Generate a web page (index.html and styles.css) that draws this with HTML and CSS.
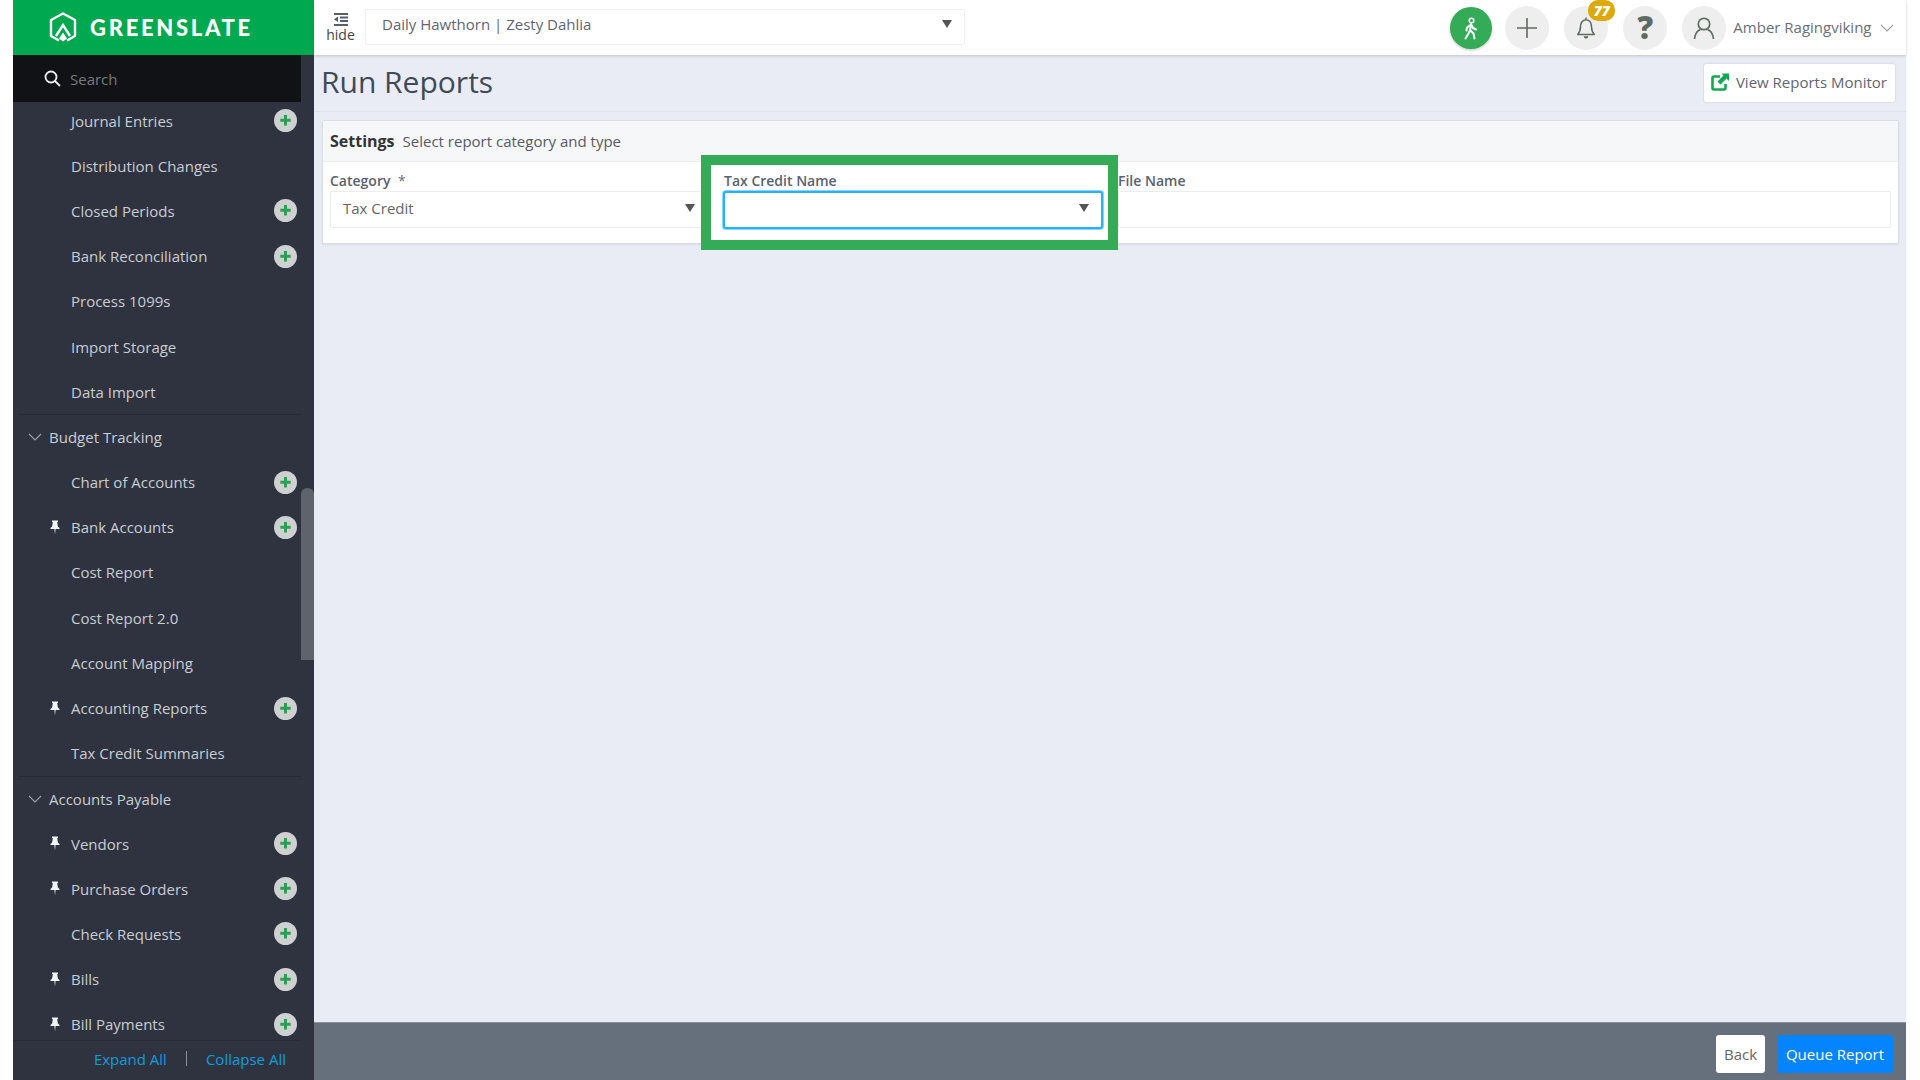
FILE: index.html
```html
<!DOCTYPE html>
<html lang="en">
<head>
    <meta charset="UTF-8">
    <meta name="viewport" content="width=device-width, initial-scale=1.0">
    <title>Run Reports</title>
    <link rel="stylesheet" href="styles.css">
</head>
<body>
    <svg class="defs" xmlns="http://www.w3.org/2000/svg">
        <symbol id="pin" viewBox="0 0 10 15">
            <path d="M2 0.5h6v1.2l-0.8 0.6 0.7 4.2 1.6 1.6v1H5.6L5 14.5 4.4 9.1H0.5v-1l1.6-1.6 0.7-4.2L2 1.7z" fill="#f2f3f4"/>
        </symbol>
        <symbol id="add" viewBox="0 0 23 23">
            <circle cx="11.5" cy="11.5" r="11.5" fill="#cfd1d1"/>
            <path d="M11.5 6v10.5M6.3 11.2h10.4" stroke="#2f9e52" stroke-width="3"/>
        </symbol>
        <symbol id="chev" viewBox="0 0 14 8">
            <path d="M1 1l6 6 6-6" fill="none" stroke="#9aa0a8" stroke-width="1.1"/>
        </symbol>
    </svg>

    <div class="app">
        <div class="sidebar">
            <div class="brand">
                <svg class="brand-mark" viewBox="0 0 28 31">
                    <path d="M10 28.5L2 24V8l12-6.5L26 8v16l-8 4.5" fill="none" stroke="#fff" stroke-width="2.4" stroke-linejoin="round"/>
                    <path d="M7 24l7-11 7 11" fill="none" stroke="#fff" stroke-width="2.4"/>
                    <path d="M14 20.5l4 6-4 3-4-3z" fill="#fff"/>
                </svg>
                <span class="brand-name">GREENSLATE</span>
            </div>
            <div class="side-body">
                <div class="side-main">
                    <div class="search">
                        <svg class="search-icon" viewBox="0 0 17 17">
                            <circle cx="7" cy="7" r="5.5" fill="none" stroke="#f0f0f0" stroke-width="1.8"/>
                            <path d="M11 11l5 5" stroke="#f0f0f0" stroke-width="1.8"/>
                        </svg>
                        <span>Search</span>
                    </div>
                    <div class="nav-list">
                        <div class="nav-row"><span class="pin-slot"></span>Journal Entries<svg class="add"><use href="#add"/></svg></div>
                        <div class="nav-row"><span class="pin-slot"></span>Distribution Changes</div>
                        <div class="nav-row"><span class="pin-slot"></span>Closed Periods<svg class="add"><use href="#add"/></svg></div>
                        <div class="nav-row"><span class="pin-slot"></span>Bank Reconciliation<svg class="add"><use href="#add"/></svg></div>
                        <div class="nav-row"><span class="pin-slot"></span>Process 1099s</div>
                        <div class="nav-row"><span class="pin-slot"></span>Import Storage</div>
                        <div class="nav-row"><span class="pin-slot"></span>Data Import</div>
                        <div class="nav-row nav-group"><svg class="chev"><use href="#chev"/></svg>Budget Tracking</div>
                        <div class="nav-row"><span class="pin-slot"></span>Chart of Accounts<svg class="add"><use href="#add"/></svg></div>
                        <div class="nav-row"><span class="pin-slot"><svg class="pin"><use href="#pin"/></svg></span>Bank Accounts<svg class="add"><use href="#add"/></svg></div>
                        <div class="nav-row"><span class="pin-slot"></span>Cost Report</div>
                        <div class="nav-row"><span class="pin-slot"></span>Cost Report 2.0</div>
                        <div class="nav-row"><span class="pin-slot"></span>Account Mapping</div>
                        <div class="nav-row"><span class="pin-slot"><svg class="pin"><use href="#pin"/></svg></span>Accounting Reports<svg class="add"><use href="#add"/></svg></div>
                        <div class="nav-row"><span class="pin-slot"></span>Tax Credit Summaries</div>
                        <div class="nav-row nav-group"><svg class="chev"><use href="#chev"/></svg>Accounts Payable</div>
                        <div class="nav-row"><span class="pin-slot"><svg class="pin"><use href="#pin"/></svg></span>Vendors<svg class="add"><use href="#add"/></svg></div>
                        <div class="nav-row"><span class="pin-slot"><svg class="pin"><use href="#pin"/></svg></span>Purchase Orders<svg class="add"><use href="#add"/></svg></div>
                        <div class="nav-row"><span class="pin-slot"></span>Check Requests<svg class="add"><use href="#add"/></svg></div>
                        <div class="nav-row"><span class="pin-slot"><svg class="pin"><use href="#pin"/></svg></span>Bills<svg class="add"><use href="#add"/></svg></div>
                        <div class="nav-row"><span class="pin-slot"><svg class="pin"><use href="#pin"/></svg></span>Bill Payments<svg class="add"><use href="#add"/></svg></div>
                    </div>
                    <div class="side-foot">
                        <a href="#">Expand All</a>
                        <span class="foot-sep"></span>
                        <a href="#">Collapse All</a>
                    </div>
                </div>
                <div class="side-track"><div class="side-thumb"></div></div>
            </div>
        </div>

        <div class="main">
            <div class="topbar">
                <div class="hide-toggle">
                    <svg class="hide-icon" viewBox="0 0 16 14">
                        <path d="M1 1h14M7 4.5h8M7 8h8M1 12h14" stroke="#55606a" stroke-width="2"/>
                        <path d="M5 3.5V9L1 6.2z" fill="#55606a"/>
                    </svg>
                    <span>hide</span>
                </div>
                <div class="project-select">
                    <span>Daily Hawthorn | Zesty Dahlia</span>
                    <i class="caret"></i>
                </div>
                <div class="top-actions">
                    <div class="round round-green">
                        <svg viewBox="0 0 24 24" class="round-icon">
                            <circle cx="12.5" cy="4.5" r="2.3" fill="none" stroke="#fff" stroke-width="1.5"/>
                            <path d="M12 8l-1 6 3.5 3.5 1 5M11 14.5l-1.5 3-3 5M11.5 9L8 11.5l-0.5 3M12.5 9l1.5 3 3 1.500" fill="none" stroke="#fff" stroke-width="2" stroke-linecap="round" stroke-linejoin="round"/>
                        </svg>
                    </div>
                    <div class="round">
                        <svg viewBox="0 0 24 24" class="round-icon">
                            <path d="M12 2v20M2 12h20" stroke="#5f6b60" stroke-width="1.6"/>
                        </svg>
                    </div>
                    <div class="round">
                        <svg viewBox="0 0 24 26" class="round-icon">
                            <path d="M3 20c2-2 3-4 3-8s2-8 6-8 6 4 6 8 1 6 3 8z" fill="none" stroke="#5f6b60" stroke-width="1.7" stroke-linejoin="round"/>
                            <path d="M12 1.5V4" stroke="#5f6b60" stroke-width="1.7"/>
                            <path d="M9.5 22a2.5 2.5 0 0 0 5 0z" fill="#5f6b60"/>
                        </svg>
                        <span class="badge">77</span>
                    </div>
                    <div class="round"><span class="help-mark">?</span></div>
                    <div class="round">
                        <svg viewBox="0 0 24 24" class="round-icon">
                            <circle cx="12" cy="8" r="5.7" fill="none" stroke="#5f6b60" stroke-width="1.7"/>
                            <path d="M2.5 23c0.5-5 3-8.5 6-9.5M21.5 23c-0.5-5-3-8.5-6-9.5" fill="none" stroke="#5f6b60" stroke-width="1.7"/>
                        </svg>
                    </div>
                    <span class="user-name">Amber Ragingviking</span>
                    <svg class="user-chev"><use href="#chev"/></svg>
                </div>
            </div>

            <div class="page-head">
                <h1>Run Reports</h1>
                <a class="monitor-btn" href="#">
                    <svg class="monitor-icon" viewBox="0 0 18 18">
                        <path d="M9 3.5H3A1.5 1.5 0 0 0 1.5 5v10A1.5 1.5 0 0 0 3 16.5h10a1.5 1.5 0 0 0 1.5-1.5v-4" fill="none" stroke="#10a94f" stroke-width="2.6"/>
                        <path d="M10.5 0.5H18V8l-2.500-2.500-6 6-3-3 6-6z" fill="#10a94f"/>
                    </svg>
                    View Reports Monitor
                </a>
            </div>

            <div class="content">
                <div class="card">
                    <div class="card-head"><b>Settings</b>Select report category and type</div>
                    <div class="form-row">
                        <div class="field">
                            <label>Category <span class="req">*</span></label>
                            <div class="input input-category">Tax Credit<i class="caret"></i></div>
                        </div>
                        <div class="field field-callout">
                            <div class="callout"></div>
                            <label>Tax Credit Name</label>
                            <div class="input input-focus"><i class="caret"></i></div>
                        </div>
                        <div class="field">
                            <label>File Name</label>
                            <div class="input"></div>
                        </div>
                    </div>
                </div>
            </div>

            <div class="action-bar">
                <button class="btn btn-back">Back</button>
                <button class="btn btn-queue">Queue Report</button>
            </div>
        </div>
    </div>
</body>
</html>
```

FILE: styles.css
```css
* {
    box-sizing: border-box;
}
body {
    margin: 0;
    background-color: #fff;
    font-family: "Open Sans", sans-serif;
    font-size: 15px;
}
.defs {
    display: none;
}
.app {
    display: flex;
    height: 100vh;
    padding: 0 14px 0 13px;
    overflow: hidden;
}

/* sidebar */
.sidebar {
    width: 301px;
    flex: none;
    display: flex;
    flex-direction: column;
    background-color: #2f3340;
}
.brand {
    height: 55px;
    flex: none;
    display: flex;
    align-items: center;
    gap: 13px;
    padding-left: 36px;
    background-color: #00a84f;
}
.brand-mark {
    width: 28px;
    height: 31px;
}
.brand-name {
    color: #fff;
    font-family: Lato, sans-serif;
    font-weight: 900;
    font-size: 22px;
    letter-spacing: 2.7px;
}
.side-body {
    flex: 1;
    min-height: 0;
    display: flex;
}
.side-main {
    width: 288px;
    flex: none;
    display: flex;
    flex-direction: column;
}
.search {
    position: relative;
    height: 47px;
    flex: none;
    display: flex;
    align-items: center;
    gap: 9px;
    padding-left: 31px;
    background-color: #111216;
    color: #77797d;
}
.search-icon {
    width: 17px;
    height: 17px;
}
.nav-list {
    flex: 1;
    min-height: 0;
    margin-top: -4px;
    overflow: hidden;
}
.nav-row {
    height: 45.2px;
    display: flex;
    align-items: center;
    padding-left: 33px;
    padding-right: 4px;
    color: #c9cdd2;
}
.nav-group {
    margin-left: 6px;
    padding-left: 9px;
    border-top: 1px solid #272a35;
}
.pin-slot {
    width: 25px;
    flex: none;
    display: flex;
    padding-left: 4px;
}
.pin {
    width: 10px;
    height: 15px;
}
.add {
    width: 23px;
    height: 23px;
    margin-left: auto;
}
.chev {
    width: 14px;
    height: 8px;
    margin-right: 7px;
}
.side-foot {
    height: 40px;
    flex: none;
    display: flex;
    align-items: center;
    justify-content: flex-end;
    gap: 19px;
    padding: 0 15px 4px 0;
    border-top: 1px solid #2a2d39;
}
.side-foot a {
    color: #0d9ddb;
    text-decoration: none;
}
.foot-sep {
    width: 1px;
    height: 15px;
    background-color: #8b9098;
}
.side-track {
    flex: 1;
}
.side-thumb {
    height: 172px;
    margin-top: 433px;
    border-radius: 6px 6px 0 0;
    background-color: #5f636b;
}

/* main column */
.main {
    flex: 1;
    min-width: 0;
    display: flex;
    flex-direction: column;
    background-color: #e9ecf5;
}
.topbar {
    height: 55px;
    flex: none;
    display: flex;
    align-items: center;
    background-color: #fff;
    box-shadow: 0 1px 3px rgba(0, 0, 0, 0.18);
}
.hide-toggle {
    width: 51px;
    flex: none;
    display: flex;
    flex-direction: column;
    align-items: center;
    padding-left: 2px;
    color: #444;
    font-size: 14px;
    line-height: 15px;
}
.hide-icon {
    width: 16px;
    height: 14px;
}
.project-select {
    width: 600px;
    height: 36px;
    margin-top: -2px;
    padding: 0 16px 6px;
    display: flex;
    align-items: center;
    justify-content: space-between;
    border: 1px solid #eef0f2;
    border-radius: 2px;
    color: #5f6570;
}
.caret {
    width: 0;
    height: 0;
    border-left: 5.5px solid transparent;
    border-right: 5.5px solid transparent;
    border-top: 8px solid #555;
}
.project-select .caret {
    margin-right: -4px;
    margin-top: 1px;
}
.top-actions {
    margin-left: auto;
    display: flex;
    align-items: center;
    padding-right: 12.5px;
}
.round {
    position: relative;
    width: 44px;
    height: 44px;
    margin-left: 15px;
    border-radius: 50%;
    display: flex;
    align-items: center;
    justify-content: center;
    background-color: #eeeeee;
}
.round-green {
    width: 42px;
    height: 42px;
    background-color: #34ab57;
    box-shadow: 0 1px 3px rgba(0, 0, 0, 0.25);
}
.round-green + .round {
    margin-left: 13.5px;
}
.round-icon {
    width: 24px;
    height: 24px;
}
.help-mark {
    color: #5f6b60;
    font-size: 31px;
    font-weight: 800;
    line-height: 1;
}
.badge {
    position: absolute;
    top: -6px;
    right: -7px;
    width: 27px;
    height: 21px;
    border-radius: 10px;
    background-color: #dca80a;
    color: #fff;
    font-size: 14px;
    font-weight: 800;
    font-style: italic;
    line-height: 21px;
    text-align: center;
}
.user-name {
    margin-left: 7px;
    padding-bottom: 2px;
    color: #6a7078;
}
.user-chev {
    width: 14px;
    height: 8px;
    margin-left: 8px;
}
.page-head {
    height: 57px;
    flex: none;
    display: flex;
    align-items: center;
    justify-content: space-between;
    padding: 0 11px 0 7px;
    border-bottom: 1px solid #dde1ea;
}
.page-head h1 {
    margin: 0 0 4px;
    color: #3f4a58;
    font-size: 30px;
    font-weight: 400;
}
.monitor-btn {
    height: 38px;
    padding: 0 8px 2px 7.5px;
    display: flex;
    align-items: center;
    gap: 6.5px;
    background-color: #fff;
    border-radius: 2px;
    box-shadow: 0 0 2px rgba(0, 0, 0, 0.2);
    color: #5f6570;
    text-decoration: none;
}
.monitor-icon {
    width: 18px;
    height: 18px;
}
.content {
    flex: 1;
    padding: 8px 7px 0 8px;
}
.card {
    background-color: #fff;
    border: 1px solid #d9dfe8;
    border-radius: 2px;
    box-shadow: 0 1px 2px rgba(0, 0, 0, 0.08);
}
.card-head {
    height: 41px;
    padding: 0 0 1px 7px;
    display: flex;
    align-items: center;
    background-color: #f6f7f8;
    border-bottom: 1px solid #eceef0;
    color: #555b64;
}
.card-head b {
    margin-right: 8px;
    color: #333;
    font-size: 16px;
    font-weight: 700;
}
.form-row {
    display: grid;
    grid-template-columns: 378px 380px 773px;
    gap: 15px;
    padding: 9px 7px 14px 7px;
}
.field {
    display: flex;
    flex-direction: column;
}
.field label {
    height: 20px;
    color: #5a6270;
    font-size: 14px;
    font-weight: 600;
    line-height: 20px;
}
.req {
    margin-left: 4px;
    color: #6a7078;
    font-weight: 400;
}
.input {
    height: 37px;
    padding: 0 7px 4px 12px;
    display: flex;
    align-items: center;
    justify-content: space-between;
    border: 1px solid #ececec;
    border-radius: 2px;
    background-color: #fff;
    color: #666;
}
.input .caret {
    margin-left: auto;
    margin-right: 1px;
}
.input-category {
    padding-right: 11px;
}
.field-callout {
    position: relative;
    z-index: 1;
}
.field-callout label {
    padding-left: 1px;
}
.callout {
    position: absolute;
    top: -16px;
    left: -22px;
    right: -15px;
    bottom: -21px;
    z-index: -1;
    border: 10px solid #34ab57;
    background-color: #fff;
}
.input-focus {
    height: 38px;
    padding-right: 11px;
    border: 2px solid #2ab0f8;
    border-radius: 3px;
    box-shadow: 0 0 0 1px #86d6fd;
}

/* bottom bar */
.action-bar {
    height: 58px;
    flex: none;
    display: flex;
    align-items: center;
    justify-content: flex-end;
    gap: 12px;
    padding: 4px 13px 0 0;
    background-color: #66707c;
    border-top: 1px solid #8b939c;
}
.btn {
    height: 38px;
    border: none;
    border-radius: 3px;
    font-family: "Open Sans", sans-serif;
    font-size: 15px;
    cursor: pointer;
}
.btn-back {
    width: 49px;
    padding: 0;
    background-color: #fff;
    color: #666;
}
.btn-queue {
    width: 116px;
    padding: 0;
    background-color: #0584ff;
    color: #fff;
}
```
